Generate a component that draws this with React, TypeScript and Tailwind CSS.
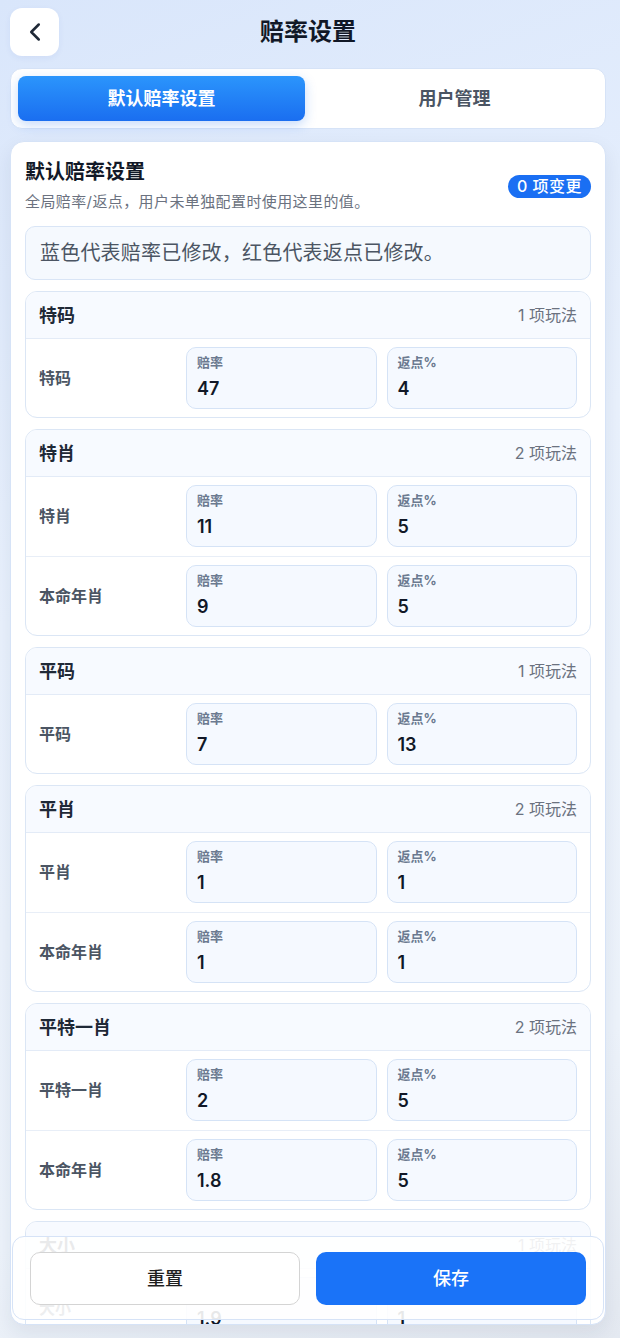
import { ChevronLeft } from "lucide-react";

interface OddsRow {
  name: string;
  odds: string;
  rebate: string;
}

interface OddsGroup {
  title: string;
  rows: OddsRow[];
}

const groups: OddsGroup[] = [
  { title: "特码", rows: [{ name: "特码", odds: "47", rebate: "4" }] },
  {
    title: "特肖",
    rows: [
      { name: "特肖", odds: "11", rebate: "5" },
      { name: "本命年肖", odds: "9", rebate: "5" },
    ],
  },
  { title: "平码", rows: [{ name: "平码", odds: "7", rebate: "13" }] },
  {
    title: "平肖",
    rows: [
      { name: "平肖", odds: "1", rebate: "1" },
      { name: "本命年肖", odds: "1", rebate: "1" },
    ],
  },
  {
    title: "平特一肖",
    rows: [
      { name: "平特一肖", odds: "2", rebate: "5" },
      { name: "本命年肖", odds: "1.8", rebate: "5" },
    ],
  },
  { title: "大小", rows: [{ name: "大小", odds: "1.9", rebate: "1" }] },
];

function Field({ label, value }: { label: string; value: string }) {
  return (
    <div className="h-[62px] rounded-[10px] border border-[#d5e3f6] bg-[#f5f9ff] px-[10px] pt-[5px]">
      <div className="text-[13px] font-bold leading-[18px] text-[#6b7a90]">{label}</div>
      <div className="mt-[6px] text-[18px] font-semibold leading-[24px] text-[#111827]">{value}</div>
    </div>
  );
}

function GroupCard({ group }: { group: OddsGroup }) {
  return (
    <div className="mt-[11px] overflow-hidden rounded-[12px] border border-[#dbe6f5] bg-white">
      <div className="flex h-[47px] items-center justify-between border-b border-[#e3ebf7] bg-[#f7faff] px-[13px]">
        <span className="text-[18px] font-bold text-[#1f2937]">{group.title}</span>
        <span className="text-[16px] text-[#6b7280]">{group.rows.length} 项玩法</span>
      </div>
      {group.rows.map((row, i) => (
        <div
          key={i}
          className={`grid grid-cols-[137px_1fr_1fr] items-center gap-[10px] px-[13px] pt-[8px] ${
            i < group.rows.length - 1 ? "border-b border-[#e8eef7] pb-[9px]" : "pb-[8px]"
          }`}
        >
          <span className="text-[16px] font-bold text-[#4b5563]">{row.name}</span>
          <Field label="赔率" value={row.odds} />
          <Field label="返点%" value={row.rebate} />
        </div>
      ))}
    </div>
  );
}

export default function App() {
  return (
    <div
      className="relative flex h-[1338px] w-[620px] flex-col overflow-hidden bg-[linear-gradient(160deg,#d9e6fb_0%,#e9f1fd_40%,#edf3fb_80%,#e4e9f1_100%)] pl-[10px] pr-[14px] pt-[8px]"
      style={{ fontFamily: '"Inter", "Noto Sans CJK SC", sans-serif' }}
    >
      {/* Header */}
      <div className="grid h-[48px] grid-cols-[49px_1fr_49px] items-center">
        <button className="flex h-[48px] w-[49px] items-center justify-center rounded-[12px] bg-white shadow-[0_2px_6px_rgba(30,64,175,0.06)]">
          <ChevronLeft size={30} strokeWidth={2} className="text-[#1f2937]" />
        </button>
        <h1 className="text-center text-[24px] font-bold text-[#111827]">赔率设置</h1>
        <div />
      </div>

      {/* Tabs */}
      <div className="mt-[12px] grid h-[61px] grid-cols-2 gap-[6px] rounded-[12px] border border-[#d6e3f7] bg-white p-[7px]">
        <button className="rounded-[8px] bg-[linear-gradient(180deg,#2b95fc_0%,#1a6ef0_100%)] text-[18px] font-bold text-white shadow-[0_4px_12px_rgba(26,110,240,0.25)]">
          默认赔率设置
        </button>
        <button className="text-[18px] font-bold text-[#4b5563]">用户管理</button>
      </div>

      {/* Main card */}
      <div className="mb-[13px] mt-[12px] min-h-0 flex-1 overflow-hidden rounded-[14px] border border-[#d6e3f7] bg-white px-[14px] pt-[16px] shadow-[0_8px_20px_rgba(30,41,59,0.08)]">
        <div className="flex items-center justify-between">
          <div>
            <h2 className="text-[20px] font-bold leading-[28px] text-[#111827]">默认赔率设置</h2>
            <p className="mt-[6px] text-[15px] leading-[20px] tracking-[0.4px] text-[#6b7280]">
              全局赔率/返点，用户未单独配置时使用这里的值。
            </p>
          </div>
          <span className="mt-[2px] rounded-full bg-[#1a6ff3] px-[9px] text-[16px] font-medium leading-[23px] tracking-[0.5px] text-white">
            0 项变更
          </span>
        </div>

        <div className="mt-[14px] flex h-[54px] items-center rounded-[10px] border border-[#d9e5f6] bg-[#f5f9fe] px-[14px] text-[20px] tracking-[0.2px] text-[#4b5563]">
          蓝色代表赔率已修改，红色代表返点已修改。
        </div>

        {groups.map((g) => (
          <GroupCard key={g.title} group={g} />
        ))}
      </div>

      {/* Bottom actions */}
      <div className="absolute bottom-[18px] left-[12px] right-[16px] grid h-[84px] grid-cols-2 items-center gap-[16px] rounded-[12px] border border-[#d6e3f7] bg-white/90 px-[17px]">
        <button className="h-[53px] rounded-[10px] border border-[#d4d4d4] bg-white text-[18px] font-medium text-[#1f1f1f]">
          重置
        </button>
        <button className="h-[53px] rounded-[10px] bg-[#1a73f8] text-[18px] font-medium text-white">
          保存
        </button>
      </div>
    </div>
  );
}
